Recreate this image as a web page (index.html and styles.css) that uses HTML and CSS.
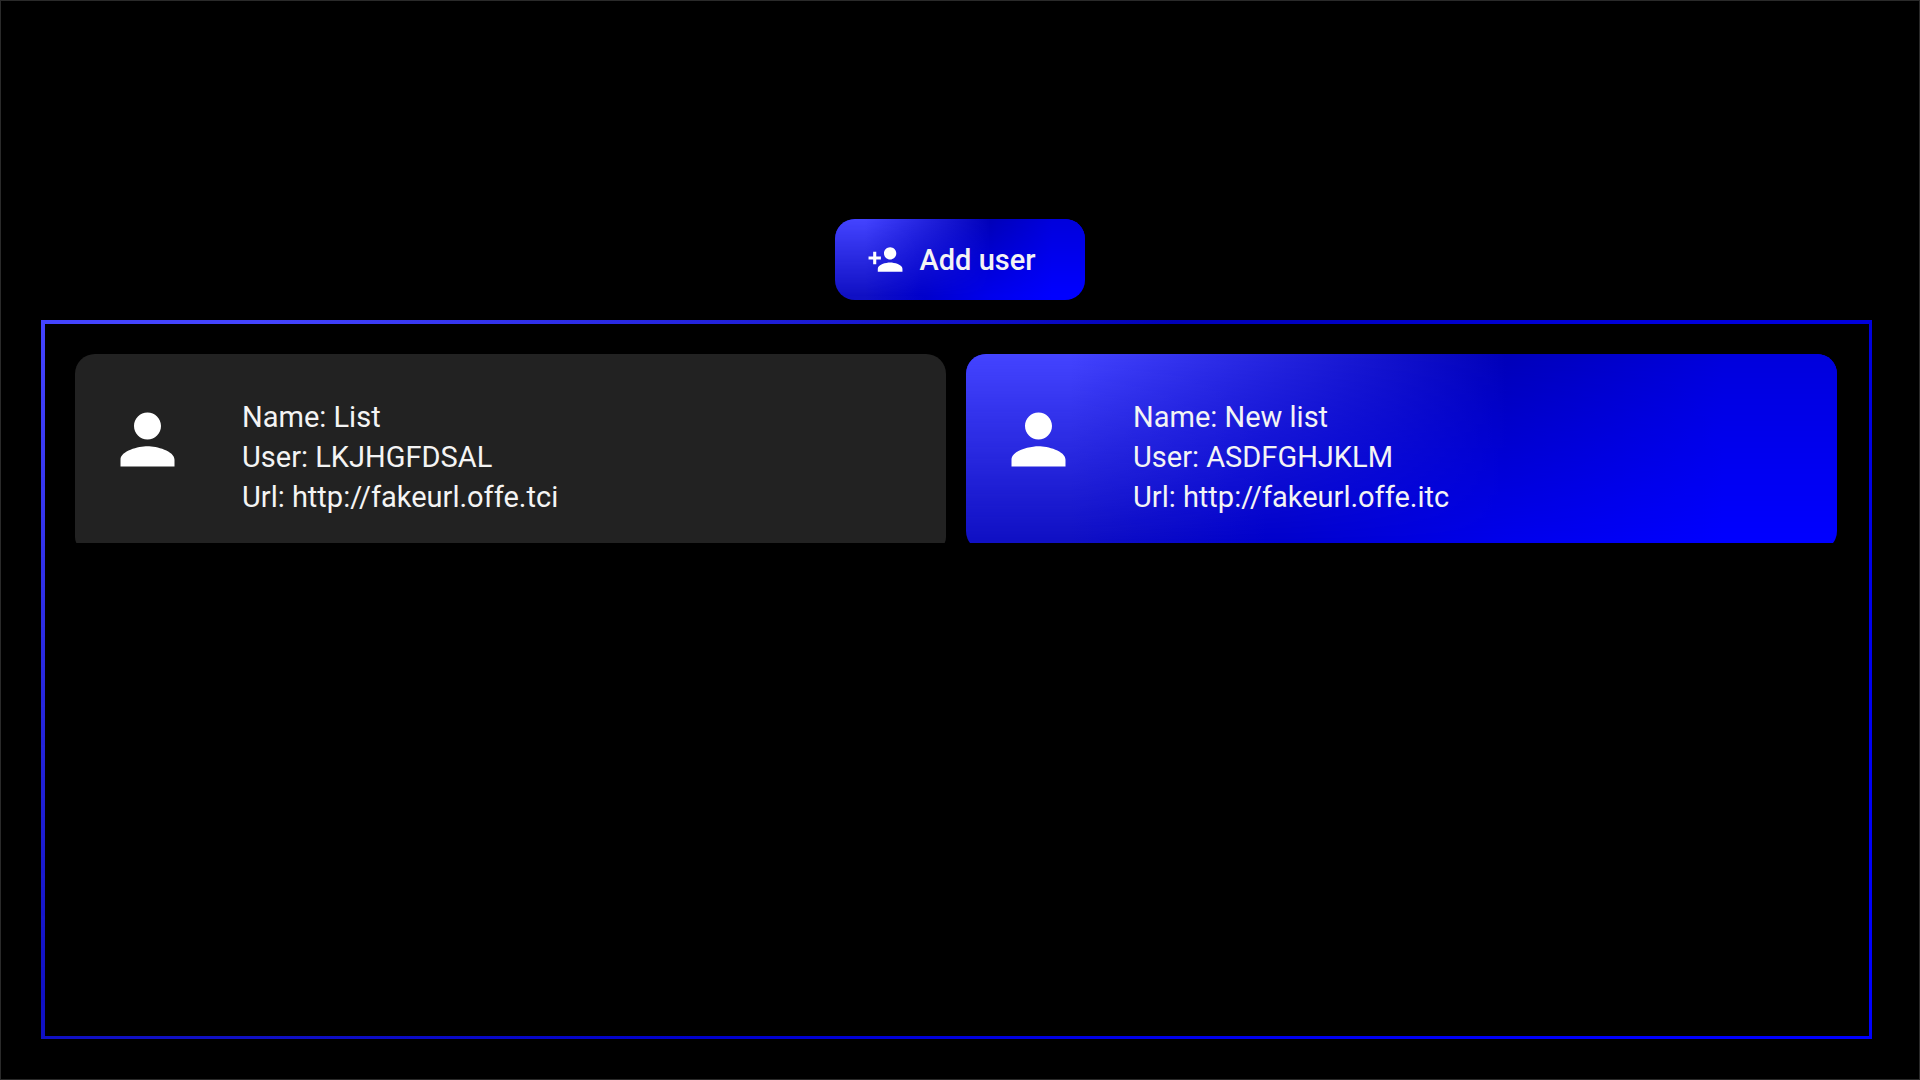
FILE: index.html
```html
<!DOCTYPE html>
<html lang="en">
<head>
  <meta charset="UTF-8">
  <title>Users</title>
  <link rel="stylesheet" href="styles.css">
</head>
<body>
  <main class="screen">
    <button type="button" class="btn-add gradient">
      <svg class="btn-icon" viewBox="0 0 24 24" aria-hidden="true">
        <path d="M15 12c2.21 0 4-1.79 4-4s-1.79-4-4-4-4 1.79-4 4 1.79 4 4 4zm-9-2V7H4v3H1v2h3v3h2v-3h3v-2H6zm9 4c-2.67 0-8 1.34-8 4v2h16v-2c0-2.66-5.33-4-8-4z"/>
      </svg>
      <span>Add user</span>
    </button>

    <section class="panel gradient">
      <div class="panel-body">
        <div class="user-list">
          <button type="button" class="user-card">
            <svg class="user-icon" viewBox="0 0 24 24" aria-hidden="true">
              <path d="M12 12c2.21 0 4-1.79 4-4s-1.79-4-4-4-4 1.79-4 4 1.79 4 4 4zm0 2c-2.67 0-8 1.34-8 4v2h16v-2c0-2.66-5.33-4-8-4z"/>
            </svg>
            <span class="user-data">
              <span>Name: List</span>
              <span>User: LKJHGFDSAL</span>
              <span>Url: http://fakeurl.offe.tci</span>
            </span>
          </button>
          <button type="button" class="user-card selected gradient">
            <svg class="user-icon" viewBox="0 0 24 24" aria-hidden="true">
              <path d="M12 12c2.21 0 4-1.79 4-4s-1.79-4-4-4-4 1.79-4 4 1.79 4 4 4zm0 2c-2.67 0-8 1.34-8 4v2h16v-2c0-2.66-5.33-4-8-4z"/>
            </svg>
            <span class="user-data">
              <span>Name: New list</span>
              <span>User: ASDFGHJKLM</span>
              <span>Url: http://fakeurl.offe.itc</span>
            </span>
          </button>
        </div>
      </div>
    </section>
  </main>
</body>
</html>
```
FILE: styles.css
```css
* {
  box-sizing: border-box;
}

body {
  margin: 0;
  background: #000;
  color: #f4f4f4;
  font-family: Roboto, sans-serif;
}

button {
  border: none;
  font-family: inherit;
  color: inherit;
  cursor: pointer;
}

.screen {
  display: flex;
  flex-direction: column;
  align-items: center;
  min-height: 100vh;
  padding: 218px 47px 40px 40px;
  border: 1px solid #2a2a2a;
}

/* Bottom colours as background, top colours fade out over them */
.gradient {
  position: relative;
  isolation: isolate;
  overflow: hidden;
  background: linear-gradient(90deg, #1010c4 12%, #0000cc 36%, #0000ec 62%, #0000ff 87%);
}

.gradient::before {
  content: "";
  position: absolute;
  inset: 0;
  z-index: -1;
  background: linear-gradient(90deg, #4444ff 12%, #0000b8 62%, #0000dc 87%);
  mask-image: linear-gradient(180deg, #000, transparent 95%);
}

.btn-add {
  display: flex;
  align-items: center;
  justify-content: center;
  gap: 16px;
  width: 250px;
  height: 81px;
  padding: 0 18px 0 0;
  margin-left: -7px;
  margin-right: -14px;
  border-radius: 20px;
  font-size: 29px;
  font-weight: 500;
}

.btn-icon {
  width: 37px;
  height: 37px;
  fill: #fff;
}

.panel {
  display: flex;
  flex: 1;
  width: 100%;
  margin-top: 20px;
  padding: 4px 3px 3px 4px;
}

.panel-body {
  flex: 1;
  padding: 30px 32px 30px 30px;
  background: #000;
}

.user-list {
  display: grid;
  grid-template-columns: 1fr 1fr;
  gap: 20px;
  overflow: hidden;
}

.user-card {
  display: flex;
  align-items: flex-start;
  gap: 54px;
  padding: 43px 32px 34px;
  margin-bottom: -8px;
  border-radius: 20px 20px 14px 14px;
  background-color: #222;
  font-size: 29px;
  line-height: 40px;
  text-align: left;
}

.user-card.selected {
  border-radius: 20px;
}

.user-icon {
  flex: none;
  width: 81px;
  height: 81px;
  margin-top: 2px;
  fill: #fff;
}

.user-data {
  display: flex;
  flex-direction: column;
}
```
